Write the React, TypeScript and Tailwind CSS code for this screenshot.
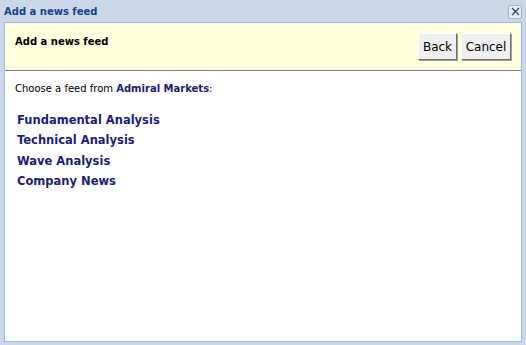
export default function App() {
  const feeds = ["Fundamental Analysis", "Technical Analysis", "Wave Analysis", "Company News"];

  return (
    <div className="w-[526px] h-[345px] bg-[#cad8ea] flex flex-col font-['Tahoma','DejaVu_Sans',sans-serif] overflow-hidden">
      {/* title bar */}
      <div className="h-[22px] flex items-center justify-between pl-[4px] pr-[4px] pt-[1px]">
        <span className="text-[10px] font-bold text-[#15428b] leading-none">Add a news feed</span>
        <button className="w-[14px] h-[14px] border border-[#9fb6d6] bg-[#e8eef7] flex items-center justify-center rounded-[2px]">
          <svg width="9" height="9" viewBox="0 0 9 9">
            <path d="M1 1 L8 8 M8 1 L1 8" stroke="#2d4f86" strokeWidth="1.4" />
          </svg>
        </button>
      </div>

      {/* panel */}
      <div className="mx-[4px] mb-[3px] flex-1 border border-[#99bbe8] bg-white flex flex-col">
        <div className="h-[48px] bg-[#ffffdd] border-b border-[#808080] flex justify-between pl-[10px] pr-[10px]">
          <div className="pt-[14px] text-[10px] font-bold text-black leading-none">Add a news feed</div>
          <div className="flex gap-[4px] pt-[10px]">
            <button className="w-[39px] h-[27px] bg-[#f0f0f0] text-[12px] text-black leading-none border border-t-white border-l-white border-r-[#707070] border-b-[#707070] shadow-[1px_1px_0_#a0a0a0]">
              Back
            </button>
            <button className="w-[50px] h-[27px] bg-[#f0f0f0] text-[12px] text-black leading-none border border-t-white border-l-white border-r-[#707070] border-b-[#707070] shadow-[1px_1px_0_#a0a0a0]">
              Cancel
            </button>
          </div>
        </div>

        <div className="pl-[10px] pt-[13px] text-[10px] text-black leading-none">
          Choose a feed from <span className="font-bold text-[#1a1a6e]">Admiral Markets</span>:
        </div>

        <div className="pl-[12px] pt-[16px] flex flex-col">
          {feeds.map((f) => (
            <a key={f} className="text-[11.5px] font-bold text-[#1c1c7a] leading-[20.4px] cursor-pointer">
              {f}
            </a>
          ))}
        </div>
      </div>
    </div>
  );
}
